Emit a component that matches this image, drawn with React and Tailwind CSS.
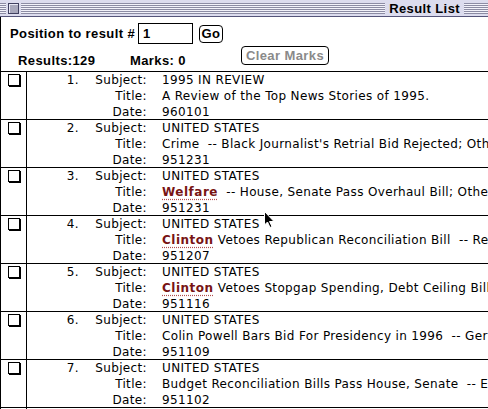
import React from 'react';

const GENEVA = { fontFamily: '"DejaVu Sans", Verdana, sans-serif' };
const CHICAGO = { fontFamily: '"Liberation Sans", Arial, sans-serif' };

const rows = [
  { n: 1, subject: '1995 IN REVIEW', title: 'A Review of the Top News Stories of 1995.', date: '960101' },
  { n: 2, subject: 'UNITED STATES', title: "Crime  -- Black Journalist's Retrial Bid Rejected; Other", date: '951231' },
  { n: 3, subject: 'UNITED STATES', hit: 'Welfare', title: '  -- House, Senate Pass Overhaul Bill; Other', date: '951231' },
  { n: 4, subject: 'UNITED STATES', hit: 'Clinton', title: ' Vetoes Republican Reconciliation Bill  -- Re', date: '951207' },
  { n: 5, subject: 'UNITED STATES', hit: 'Clinton', title: ' Vetoes Stopgap Spending, Debt Ceiling Bills', date: '951116' },
  { n: 6, subject: 'UNITED STATES', title: 'Colin Powell Bars Bid For Presidency in 1996  -- Ger', date: '951109' },
  { n: 7, subject: 'UNITED STATES', title: 'Budget Reconciliation Bills Pass House, Senate  -- Er', date: '951102' },
];

function Stripes({ className }) {
  return (
    <div
      className={`h-[11px] bg-[repeating-linear-gradient(to_bottom,#8c8ca4_0px,#8c8ca4_1px,#f2f2fa_1px,#f2f2fa_2px)] ${className}`}
    />
  );
}

function TitleBar() {
  return (
    <div className="flex h-[17px] items-center bg-[#dcdcee] border-b border-[#55557a]">
      <Stripes className="w-[6px]" />
      <div className="mx-[2px] h-[11px] w-[11px] border border-[#404060] bg-[#a8a8bc] shadow-[inset_1px_1px_0_#e8e8f4]" />
      <Stripes className="flex-1" />
      <div className="px-[4px] text-[13px] font-bold tracking-[0.4px] leading-none text-black" style={CHICAGO}>
        Result List
      </div>
      <Stripes className="w-[24px]" />
    </div>
  );
}

function Row({ r }) {
  return (
    <div className="flex h-[48px] border-b border-black">
      <div className="w-[26px] shrink-0 border-r border-black pl-[7px] pt-[2px]">
        <div className="h-[12px] w-[12px] border border-black bg-white shadow-[1px_1px_0_#000]" />
      </div>
      <div className="flex min-w-0 flex-1 text-[12px] leading-[16px] tracking-[0.35px] text-black" style={GENEVA}>
        <div className="w-[52px] shrink-0 text-right">{r.n}.</div>
        <div className="w-[68px] shrink-0 text-right">
          <div>Subject:</div>
          <div>Title:</div>
          <div>Date:</div>
        </div>
        <div className="min-w-0 flex-1 overflow-hidden whitespace-pre pl-[15px]">
          <div>{r.subject}</div>
          <div>
            {r.hit && (
              <span className="font-bold tracking-[0.5px] text-[#781414] underline decoration-dotted decoration-[#b05050] underline-offset-[3px]">
                {r.hit}
              </span>
            )}
            {r.title}
          </div>
          <div>{r.date}</div>
        </div>
      </div>
    </div>
  );
}

function Cursor() {
  return (
    <svg className="absolute left-[264px] top-[211px]" width="12" height="18" viewBox="0 0 12 18">
      <path d="M0.5 0.5 L0.5 14 L3.5 11 L6 16.5 L8 15.5 L5.5 10.5 L10 10.5 Z" fill="#000" stroke="#fff" strokeWidth="1" />
    </svg>
  );
}

export default function App() {
  return (
    <div className="relative h-[409px] w-[488px] overflow-hidden bg-white">
      <TitleBar />
      <div className="border-l border-black">
        <div className="h-[54px]" style={CHICAGO}>
          <div className="flex items-center pt-[6px] pl-[9px]">
            <span className="text-[13px] font-bold tracking-[0.4px] text-black">Position to result #</span>
            <div className="ml-[3px] flex h-[21px] w-[55px] items-center border border-black pl-[4px] text-[13px] font-bold">
              1
            </div>
            <button className="ml-[6px] h-[18px] w-[24px] rounded-[4px] border border-black text-[13px] font-bold leading-none tracking-[0.4px]">
              Go
            </button>
          </div>
          <div className="flex items-start">
            <span className="mt-[10px] ml-[17px] w-[112px] text-[13px] font-bold leading-[14px] tracking-[0.4px]">
              Results:129
            </span>
            <span className="mt-[10px] w-[111px] text-[13px] font-bold leading-[14px] tracking-[0.4px]">Marks: 0</span>
            <button className="mt-[2px] h-[19px] w-[88px] rounded-[4px] border border-black text-[13px] font-bold leading-none tracking-[0.4px] text-[#8a8a8a]">
              Clear Marks
            </button>
          </div>
        </div>
        <div className="border-t border-black">
          {rows.map((r) => (
            <Row key={r.n} r={r} />
          ))}
          <div className="flex h-[10px]">
            <div className="w-[26px] border-r border-black" />
          </div>
        </div>
      </div>
      <Cursor />
    </div>
  );
}
